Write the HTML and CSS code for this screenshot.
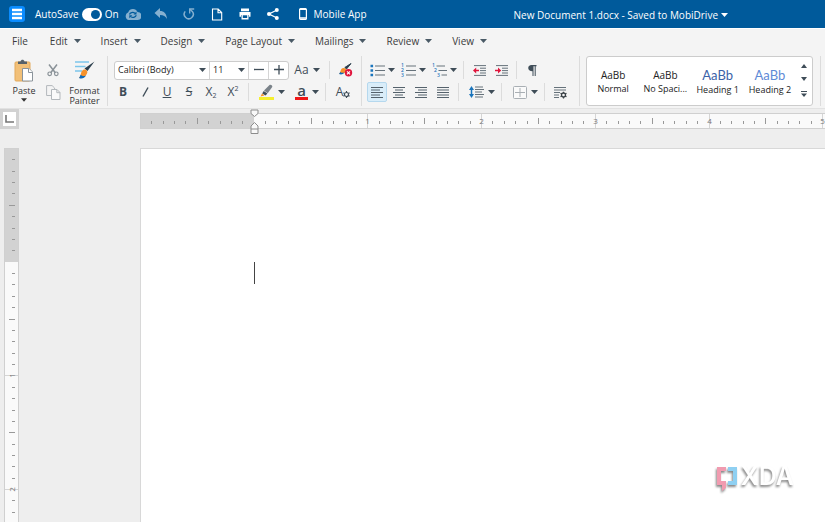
FILE: index.html
```html
<!DOCTYPE html>
<html lang="en">
<head>
<meta charset="utf-8">
<title>New Document 1.docx</title>
<link rel="stylesheet" href="styles.css">
</head>
<body>
<svg class="defs" aria-hidden="true">
  <symbol id="caret" viewBox="0 0 7 4"><path d="M0 0h7L3.500 4z" fill="currentColor"/></symbol>
</svg>

<header class="topbar">
  <button class="app-logo" aria-label="Home">
    <svg width="16" height="16" viewBox="0 0 16 16"><rect width="16" height="16" rx="3" fill="#0a8cff"/><path d="M3 4h10M3 8h10M3 12h10" stroke="#fff" stroke-width="2.400"/></svg>
  </button>
  <label class="autosave">AutoSave <input type="checkbox" role="switch" checked> On</label>
  <div class="quick">
    <button aria-label="Sync" class="dim"><svg width="16" height="12" viewBox="0 0 16 12"><path d="M4 12a4 4 0 0 1-.7-7.700A5 5 0 0 1 12.500 4 3.900 3.900 0 0 1 12.400 12z" fill="currentColor"/><path d="M4.500 6.500C5 4.500 8 3.700 10 5.300M11.300 7.300C10.500 9.500 7.500 10 5.700 8.600" fill="none" stroke="#005a9b" stroke-width="1.200"/><path d="M11.500 3.600v3h-3zM4.300 10.300v-3h3z" fill="#005a9b"/></svg></button>
    <button aria-label="Undo" class="dim"><svg width="14" height="12" viewBox="0 0 14 12"><path d="M6 0v3c4 0 6.500 2.500 7 8-1.500-2.600-3.500-4-7-4v3L0.500 5z" fill="currentColor"/></svg></button>
    <button aria-label="Redo" class="dim"><svg width="12" height="12" viewBox="0 0 12 12"><path d="M2.200 3.400A4.500 4.500 0 1 0 9.300 3.400L6.800 1.200" fill="none" stroke="currentColor" stroke-width="1.500"/><path d="M6.700 5.500V1h4.500" fill="none" stroke="currentColor" stroke-width="1.400"/></svg></button>
    <button aria-label="New document"><svg width="12" height="13" viewBox="0 0 12 13"><path d="M1.500 1h5.700l3.500 3.500V12h-9.200zM7 1v3.700h3.700" fill="none" stroke="currentColor" stroke-width="1.100"/></svg></button>
    <button aria-label="Print"><svg width="12" height="12" viewBox="0 0 12 12"><path d="M2 0.500h8v2.700H2zM0.500 4h11v4.700H10V7H2v1.700H0.500zM2.500 7h7v4.500h-7z" fill="currentColor"/><path d="M3.800 7.300h4.400v2.700H3.800z" fill="#005a9b"/></svg></button>
    <button aria-label="Share"><svg width="12" height="12" viewBox="0 0 12 12"><path d="M10 2L2 6l8 4" fill="none" stroke="currentColor" stroke-width="1.300"/><circle cx="9.800" cy="2" r="2" fill="currentColor"/><circle cx="2" cy="6" r="2" fill="currentColor"/><circle cx="9.800" cy="10" r="2" fill="currentColor"/></svg></button>
  </div>
  <button class="mobile"><svg width="8" height="12" viewBox="0 0 8 12"><rect x=".6" y=".6" width="6.800" height="10.800" rx="1" fill="none" stroke="currentColor" stroke-width="1.200"/><path d="M1 1.300h6M1 10h6" stroke="currentColor" stroke-width="1.500"/></svg>Mobile App</button>
  <button class="doc-title">New Document 1.docx - Saved to MobiDrive <svg width="7" height="4"><use href="#caret"/></svg></button>
</header>

<nav class="menu">
  <button class="file">File</button>
  <button>Edit <svg width="7" height="4"><use href="#caret"/></svg></button>
  <button>Insert <svg width="7" height="4"><use href="#caret"/></svg></button>
  <button>Design <svg width="7" height="4"><use href="#caret"/></svg></button>
  <button>Page Layout <svg width="7" height="4"><use href="#caret"/></svg></button>
  <button>Mailings <svg width="7" height="4"><use href="#caret"/></svg></button>
  <button>Review <svg width="7" height="4"><use href="#caret"/></svg></button>
  <button>View <svg width="7" height="4"><use href="#caret"/></svg></button>
</nav>

<section class="ribbon" aria-label="Tools">
  <div class="group clipboard">
    <button class="big paste">
      <svg width="20" height="24" viewBox="0 0 20 24"><rect x="1" y="3" width="15" height="19" rx="1" fill="#f2c078" stroke="#e3a95a"/><path d="M4 5V2.500h2.500C7 0 10 0 10.500 2.500H13V5z" fill="#56616a"/><path d="M8.500 9.500h6.500l3.500 3.500v9H8.500z" fill="#fff" stroke="#8b949b"/><path d="M14.500 9.500v4h4" fill="#fff" stroke="#8b949b"/></svg>
      <span>Paste</span>
      <svg width="6" height="4"><use href="#caret"/></svg>
    </button>
    <div class="pair">
      <button aria-label="Cut"><svg width="12" height="14" viewBox="0 0 12 14"><path d="M2 1.500l6.300 8.300M10 1.500L3.700 9.800" stroke="#8a9298" stroke-width="1.500"/><circle cx="2.700" cy="10.800" r="1.800" fill="none" stroke="#8a9298" stroke-width="1.200"/><circle cx="9.300" cy="10.800" r="1.800" fill="none" stroke="#8a9298" stroke-width="1.200"/></svg></button>
      <button aria-label="Copy"><svg width="15" height="15" viewBox="0 0 15 15"><path d="M5 10.500H.6V.6h5.500l2.500 2.400v1" fill="none" stroke="#b3b8bc"/><path d="M5.500 4.500h5.500l3 3v7H5.500zM10.800 4.500v3.200H14" fill="#fafafa" stroke="#b3b8bc"/></svg></button>
    </div>
    <button class="big painter">
      <svg width="20" height="20" viewBox="0 0 20 20"><path d="M0 2h14M0 6.500h10.500M0 11h7" stroke="#7cc5ea" stroke-width="1.400"/><path d="M19.500 1.500L12.500 11l-3-2.500z" fill="#2b3e4c"/><path d="M9 9.500c2-.5 4 1.500 3.200 3.500-1 3-3.500 5-8.200 5 1-1.500 1.500-2.500 2-4.500.4-2 1.300-3.600 3-4z" fill="#f6922b"/><path d="M4 18c.8-1 1.200-2 1.600-3.200 2 1.700 3.500 1.400 5.400.7C9.500 18 7 19.300 4 18z" fill="#0f6cbd"/></svg>
      <span>Format<br>Painter</span>
    </button>
  </div>

  <div class="group font">
    <div class="row">
      <div class="combo">
        <span class="pick family"><select aria-label="Font family"><option>Calibri (Body)</option></select><svg width="7" height="4"><use href="#caret"/></svg></span>
        <span class="pick size"><select aria-label="Font size"><option>11</option></select><svg width="7" height="4"><use href="#caret"/></svg></span>
        <button aria-label="Decrease size"><svg width="10" height="10" viewBox="0 0 10 10"><path d="M0 4.500h10" stroke="currentColor" stroke-width="1.300"/></svg></button>
        <button aria-label="Increase size"><svg width="10" height="10" viewBox="0 0 10 10"><path d="M0 4.500h10M5 0v9.500" stroke="currentColor" stroke-width="1.300"/></svg></button>
      </div>
      <button class="case">Aa <svg width="7" height="4"><use href="#caret"/></svg></button>
      <i class="sep"></i>
      <button class="tool" aria-label="Clear formatting"><svg width="15" height="14" viewBox="0 0 15 14"><path d="M13 .5L8.500 6 6.800 4.500z" fill="#2b3e4c" stroke="#2b3e4c"/><path d="M5.500 5c2 0 3.300 1.500 2.500 3-.8 2-3 3.300-7 3 1-1 1-1.500 1.500-3 .5-1.700 1.500-3 3-3z" fill="#f6922b"/><path d="M1 11c.6-.6.900-1.200 1.200-2 1.500 1.100 2.800 1 4.300.5C5 11.500 3 11.800 1 11z" fill="#0f6cbd"/><circle cx="10.500" cy="9.800" r="3.700" fill="#e0143c"/><path d="M9 8.300l3 3M12 8.300l-3 3" stroke="#fff" stroke-width="1.100"/></svg></button>
    </div>
    <div class="row">
      <button class="tool bold">B</button>
      <button class="tool" aria-label="Italic"><svg width="7" height="10" viewBox="0 0 7 10"><path d="M6 .5L1 9.500" stroke="currentColor" stroke-width="1.400"/></svg></button>
      <button class="tool under">U</button>
      <button class="tool strike">S</button>
      <button class="tool">X<sub>2</sub></button>
      <button class="tool">X<sup>2</sup></button>
      <i class="sep"></i>
      <button class="split" aria-label="Highlight"><svg width="15" height="16" viewBox="0 0 15 16"><path d="M10.500 1c1.200-1 3.500.8 2.700 2L8.700 9.300 5 6.500z" fill="#7a8289"/><path d="M4.700 6.900l3.700 2.700-1.900 2-3.300-2.200z" fill="#3d4b56"/><path d="M3 9.600l2.500 1.800-4 1z" fill="#f6922b"/><path d="M0 14.500h15" stroke="#f5ef2f" stroke-width="3"/></svg><svg width="7" height="4"><use href="#caret"/></svg></button>
      <button class="split" aria-label="Font colour"><span class="colour">a</span><svg width="7" height="4"><use href="#caret"/></svg></button>
      <i class="sep"></i>
      <button class="tool wide" aria-label="Font settings">A<svg width="7" height="7" viewBox="0 0 8 8"><circle cx="4" cy="4" r="2.300" fill="none" stroke="currentColor" stroke-width="1.300"/><path d="M4 0v1.500M4 6.500V8M.5 2l1.300.8M6.200 5.200L7.500 6M.5 6l1.300-.8M6.200 2.800L7.500 2" stroke="currentColor" stroke-width="1.300"/></svg></button>
    </div>
  </div>

  <div class="group para">
    <div class="row">
      <button class="split list" aria-label="Bullets"><svg width="15" height="13" viewBox="0 0 15 13"><path d="M5 2h10M5 6.500h10M5 11h10" stroke="#66727b" stroke-width="1.200"/><path d="M.5 .7h2.600v2.600H.5zM.5 5.200h2.600v2.600H.5zM.5 9.700h2.600v2.600H.5z" fill="#1b75bc"/></svg><svg width="7" height="4"><use href="#caret"/></svg></button>
      <button class="split list" aria-label="Numbering"><svg width="15" height="17" viewBox="0 0 15 17"><path d="M5 4h10M5 8.500h10M5 13h10" stroke="#66727b" stroke-width="1.200"/><g class="digits"><text x="0" y="5">1</text><text x="0" y="10">2</text><text x="0" y="15">3</text></g></svg><svg width="7" height="4"><use href="#caret"/></svg></button>
      <button class="split list" aria-label="Multilevel list"><svg width="15" height="17" viewBox="0 0 15 17"><path d="M4.500 4H13M6.500 8.500H15M9.500 13H15" stroke="#66727b" stroke-width="1.200"/><g class="digits"><text x="0" y="5">1</text><text x="2" y="10">2</text><text x="5" y="15">3</text></g></svg><svg width="7" height="4"><use href="#caret"/></svg></button>
      <i class="sep"></i>
      <button class="tool" aria-label="Decrease indent"><svg width="13" height="11" viewBox="0 0 13 11"><path d="M1 .6h12M7 3.200h6M7 5.600h6M7 8h6M1 10.400h12" stroke="#66727b"/><path d="M2 5.500h4" stroke="#e0143c" stroke-width="1.500"/><path d="M0 5.500l3.200-3v6z" fill="#e0143c"/></svg></button>
      <button class="tool" aria-label="Increase indent"><svg width="13" height="11" viewBox="0 0 13 11"><path d="M1 .6h12M7 3.200h6M7 5.600h6M7 8h6M1 10.400h12" stroke="#66727b"/><path d="M0 5.500h4" stroke="#e0143c" stroke-width="1.500"/><path d="M6.200 5.500L3 2.500v6z" fill="#e0143c"/></svg></button>
      <i class="sep"></i>
      <button class="tool" aria-label="Show marks"><svg width="9" height="11" viewBox="0 0 9 11"><path d="M8.500 0v1.200h-.8V11h-1V1.200H5.500V11h-1V6.300C-1 6.300-1 0 3.500 0z" fill="currentColor"/></svg></button>
    </div>
    <div class="row">
      <button class="tool on" aria-label="Align left"><svg width="12" height="11" viewBox="0 0 12 11"><path d="M0 .5h12M0 3h9M0 5.500h12M0 8h9M0 10.500h12" stroke="#55626c"/></svg></button>
      <button class="tool" aria-label="Align centre"><svg width="12" height="11" viewBox="0 0 12 11"><path d="M0 .5h12M2 3h8M0 5.500h12M2 8h8M0 10.500h12" stroke="#55626c"/></svg></button>
      <button class="tool" aria-label="Align right"><svg width="12" height="11" viewBox="0 0 12 11"><path d="M0 .5h12M3 3h9M0 5.500h12M3 8h9M0 10.500h12" stroke="#55626c"/></svg></button>
      <button class="tool" aria-label="Justify"><svg width="12" height="11" viewBox="0 0 12 11"><path d="M0 .5h12M0 3h12M0 5.500h12M0 8h12M0 10.500h12" stroke="#55626c"/></svg></button>
      <i class="sep"></i>
      <button class="split" aria-label="Line spacing"><svg width="15" height="12" viewBox="0 0 15 12"><path d="M6 1h8M6 3.500h9M6 6h7M6 8.500h9M6 11h8" stroke="#66727b"/><path d="M2.500 2v8" stroke="#1b75bc" stroke-width="1.500"/><path d="M0 4l2.500-4L5 4zM0 8l2.500 4L5 8z" fill="#1b75bc"/></svg><svg width="7" height="4"><use href="#caret"/></svg></button>
      <i class="sep"></i>
      <button class="split" aria-label="Borders"><svg width="14" height="13" viewBox="0 0 14 13"><rect x=".5" y=".5" width="13" height="12" rx="1" fill="#fafafa" stroke="#a9afb4"/><path d="M7 2v9M2 6.500h10" stroke="#a9afb4"/></svg><svg width="7" height="4"><use href="#caret"/></svg></button>
      <i class="sep"></i>
      <button class="tool" aria-label="Paragraph settings"><svg width="13" height="13" viewBox="0 0 13 13"><path d="M0 1.500h12M0 4h12M0 6.500h6M0 9h5M0 11.500h5" stroke="#66727b"/><circle cx="9.500" cy="9" r="2" fill="none" stroke="#3b4247" stroke-width="1.300"/><path d="M9.500 5.700v1.300M9.500 11v1.400M6.500 7.300l1.300.7M11.200 10l1.300.7M6.500 10.700l1.300-.7M11.200 8l1.300-.7" stroke="#3b4247" stroke-width="1.200"/></svg></button>
    </div>
  </div>

  <div class="group styles">
    <div class="gallery">
      <button><b>AaBb</b><span>Normal</span></button>
      <button><b>AaBb</b><span>No Spaci...</span></button>
      <button class="h1"><b>AaBb</b><span>Heading 1</span></button>
      <button class="h2"><b>AaBb</b><span>Heading 2</span></button>
      <div class="arrows">
        <button aria-label="Scroll up"><svg width="6" height="4" viewBox="0 0 6 4"><path d="M0 4h6L3 0z" fill="currentColor"/></svg></button>
        <button aria-label="Scroll down"><svg width="6" height="4" viewBox="0 0 6 4"><path d="M0 0h6L3 4z" fill="currentColor"/></svg></button>
        <button aria-label="More styles"><svg width="6" height="7" viewBox="0 0 6 7"><path d="M0 0h6v1H0zM0 2.500h6L3 6z" fill="currentColor"/></svg></button>
      </div>
    </div>
  </div>
</section>

<main class="workspace">
  <button class="corner" aria-label="Tab stop"><svg width="9" height="8" viewBox="0 0 9 8"><path d="M1 0v7h8" fill="none" stroke="#777" stroke-width="1.600"/></svg></button>
  <div class="hruler">
    <svg id="hticks" class="ticks"></svg>
    <svg class="marker" width="9" height="26" viewBox="0 0 9 26"><path d="M1 1h7v3.500l-3.500 3L1 4.500zM1 24.500V17l3.500-3.500L8 17v7.500zM1 20h7" fill="#f8f8f8" stroke="#8c8c8c"/></svg>
  </div>
  <div class="vruler"><svg id="vticks" class="ticks"></svg></div>
  <article class="page">
    <div class="cursor"></div>
    <div class="watermark">
      <svg width="20" height="26" viewBox="0 0 20 26"><path d="M9 1H0v18h5v6l4-3v-7H4V5h5z" fill="#f19bb0"/><path d="M11 1h9v18h-9v-4h5V5h-5z" fill="#8fd0f2"/></svg>
      <span>XDA</span>
    </div>
  </article>
</main>
<script src="rulers.js"></script>
</body>
</html>
```

FILE: styles.css
```css
* { box-sizing: border-box; }
body {
  margin: 0;
  height: 100vh;
  display: flex;
  flex-direction: column;
  overflow: hidden;
  background: #eee;
  color: #333;
  font: 10px/12px "Open Sans", "Noto Sans", sans-serif;
}
button {
  display: flex;
  align-items: center;
  justify-content: center;
  margin: 0;
  padding: 0;
  border: 0;
  background: none;
  color: inherit;
  font: inherit;
  white-space: nowrap;
}
svg { flex: none; }
.defs { position: absolute; width: 0; height: 0; }

.topbar {
  display: flex;
  align-items: center;
  height: 28px;
  flex: none;
  padding-left: 9px;
  background: #005a9b;
  color: #fff;
}
.autosave { display: flex; align-items: center; gap: 3px; margin-left: 10px; white-space: nowrap; }
.autosave input {
  appearance: none;
  width: 20px;
  height: 13px;
  margin: 0;
  padding: 2px;
  border-radius: 7px;
  background: #fff;
}
.autosave input::before {
  content: "";
  display: block;
  width: 9px;
  height: 9px;
  margin-left: 7px;
  border-radius: 50%;
  background: #005a9b;
}
.quick { display: flex; }
.quick button { width: 28px; height: 28px; }
.quick .dim { color: #85b0d0; }
.mobile { gap: 7px; margin-left: 12px; }
.doc-title { gap: 3px; margin: 2px auto 0 147px; }

.menu {
  display: flex;
  gap: 20px;
  flex: none;
  height: 26px;
  padding: 0 0 2px 12px;
  border-top: 1px solid #fff;
  background: #f4f4f4;
  color: #3b3b3b;
}
.menu button { gap: 6px; }
.menu .file { padding-right: 2px; }
.menu svg { color: #4a5a66; }

.ribbon {
  display: flex;
  flex: none;
  height: 55px;
  padding-top: 2px;
  background: #f4f4f4;
  border-bottom: 1px solid #e2e2e2;
  color: #3f4d58;
}
.group { height: 50px; border-right: 1px solid #dcdcdc; flex: none; }
.clipboard { display: flex; width: 108px; padding-left: 5px; color: #333; font-size: 9px; line-height: 10px; }
.big { flex-direction: column; justify-content: flex-start; width: 38px; padding-top: 3px; }
.big span { margin: 3px 0 2px; }
.big.painter { width: 43px; padding-top: 4px; }
.big.painter span { margin-top: 6px; }
.pair { width: 20px; display: grid; grid-template-rows: 22px 22px; padding-top: 3px; }

.font { width: 254px; padding: 3px 0 0 4px; }
.para { width: 218px; padding: 3px 0 0 4px; }
.row { display: flex; align-items: center; height: 22px; }
.sep { width: 1px; height: 18px; margin: 0 4px; background: #dcdcdc; }
.combo {
  display: flex;
  height: 19px;
  margin-left: 2px;
  border: 1px solid #ccc;
  border-radius: 3px;
  background: #fff;
}
.combo > * + * { border-left: 1px solid #d5d5d5; }
.combo button { width: 20px; }
.pick { display: flex; align-items: center; padding-right: 3px; }
.pick select {
  appearance: none;
  flex: 1;
  min-width: 0;
  height: 17px;
  padding: 0 3px;
  border: 0;
  background: none;
  color: #222;
  font: 9px/12px "Open Sans", sans-serif;
}
.family { width: 94px; }
.size { width: 39px; }
.case { width: 36px; gap: 4px; font-size: 12px; }
.tool { width: 22px; height: 20px; font-size: 12px; }
.tool.wide { width: 26px; }
.wide svg { align-self: flex-end; margin-bottom: 4px; }
.bold { font-weight: 700; }
.under { text-decoration: underline; }
.strike { text-decoration: line-through; }
.tool sub, .tool sup { font-size: 7px; line-height: 8px; }
.tool sub { align-self: flex-end; margin-bottom: 2px; }
.tool sup { align-self: flex-start; margin-top: 3px; }
.on { width: 20px; margin: 0 1px; border: 1px solid #b5d8ee; border-radius: 2px; background: #d9edf9; }
.split { width: 34px; height: 20px; gap: 4px; justify-content: flex-end; padding-right: 2px; }
.split.list { width: 31px; gap: 3px; }
.colour { width: 13px; border-bottom: 3px solid #f01818; font: 600 15px/13px "Open Sans", sans-serif; }
.digits { fill: #1b75bc; font: 600 5px "Open Sans", sans-serif; }

.styles { flex: 1; max-width: 241px; padding-left: 6px; padding-right: 7px; }
.gallery {
  display: flex;
  height: 50px;
  border: 1px solid #ccc;
  border-radius: 3px;
  background: #fff;
  color: #222;
}
.gallery > button { flex: 1; flex-direction: column; padding-top: 2px; font-size: 9px; gap: 1px; }
.gallery b { font-weight: 500; font-size: 10px; line-height: 13px; }
.gallery .h1 b, .gallery .h2 b { font: 400 13px/15px Lato, sans-serif; }
.gallery .h1 b { color: #3c62a8; }
.gallery .h2 b { color: #5e8ad6; }
.arrows { display: grid; width: 16px; padding: 2px 0; color: #3f4d58; }

.workspace {
  flex: 1;
  min-height: 0;
  display: grid;
  grid-template: 39px 1fr / 19px 1fr;
}
.corner { width: 19px; height: 20px; border: 3px solid #d2d2d2; background: #fff; }
.hruler, .vruler { border: 1px solid #d0d0d0; }
.hruler {
  position: relative;
  height: 16px;
  margin: 4px 0 0 121px;
  border-right: 0;
  background: linear-gradient(to right, #d2d2d2 113px, #fafafa 113px);
}
.vruler {
  margin-left: 4px;
  border-bottom: 0;
  min-height: 0;
  overflow: hidden;
  background: linear-gradient(to bottom, #d2d2d2 113px, #fafafa 113px);
}
.ticks { display: block; width: 100%; height: 100%; stroke: #999; }
.ticks .full { stroke: #d5d5d5; }
.ticks text { stroke: none; fill: #777; font: 8px "Open Sans", sans-serif; text-anchor: middle; }
.marker { position: absolute; left: 109px; top: -5px; }
.page {
  position: relative;
  margin-left: 121px;
  padding: 113px;
  border: solid #d8d8d8;
  border-width: 1px 0 0 1px;
  background: #fff;
}
.cursor { width: 1px; height: 22px; background: #444; }
.watermark {
  position: absolute;
  right: 31px;
  bottom: 30px;
  display: flex;
  align-items: flex-start;
  gap: 4px;
  color: #fff;
  font: 600 25px/20px Inter, sans-serif;
  filter: drop-shadow(-1px 2px 1px #888);
}
```

FILE: rulers.js
```js
// Ten ticks to the inch; the first inch is the page margin.
const TENTH = 11.37;
const NS = "http://www.w3.org/2000/svg";

function add(svg, name, attrs) {
  const el = document.createElementNS(NS, name);
  for (const key in attrs) el.setAttribute(key, attrs[key]);
  svg.append(el);
  return el;
}

function draw(id, vertical) {
  const svg = document.getElementById(id);
  const box = svg.getBoundingClientRect();
  const length = vertical ? box.height : box.width;
  svg.replaceChildren();
  for (let i = 1; i * TENTH < length; i++) {
    const at = Math.round(i * TENTH) - 0.5;
    const whole = i % 10 === 0;
    if (whole && i === 10) continue;
    const [from, to] = whole ? [0, 14] : i % 5 === 0 ? [4, 10] : [7, 10];
    add(svg, "line", vertical
      ? { x1: from, x2: to, y1: at, y2: at, class: whole ? "full" : "" }
      : { y1: from, y2: to, x1: at, x2: at, class: whole ? "full" : "" });
    if (whole) {
      const place = vertical ? { transform: `translate(10 ${at}) rotate(-90)` } : { x: at, y: 10 };
      add(svg, "text", place).textContent = i / 10 - 1;
    }
  }
}

function drawAll() {
  draw("hticks", false);
  draw("vticks", true);
}

drawAll();
addEventListener("resize", drawAll);
```
